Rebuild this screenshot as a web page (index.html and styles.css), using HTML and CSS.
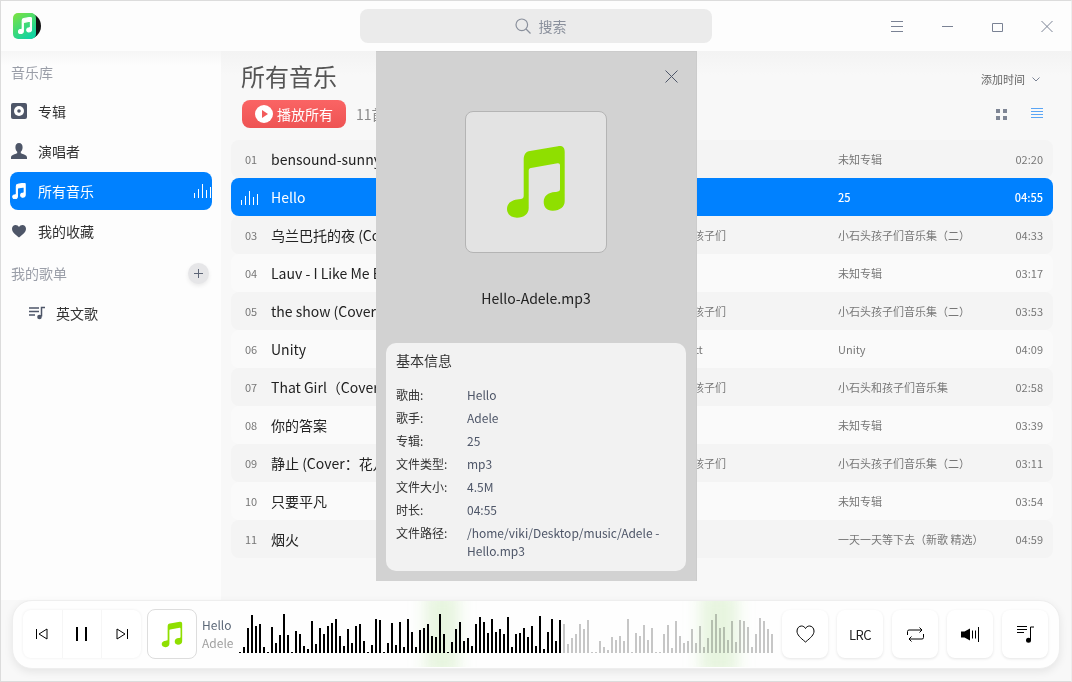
FILE: index.html
```html
<!DOCTYPE html>
<html lang="zh-CN">
<head>
    <meta charset="UTF-8">
    <title>音乐</title>
    <link rel="stylesheet" href="styles.css">
</head>
<body>
<svg class="defs" width="0" height="0">
    <symbol id="note" viewBox="0 0 62 74">
        <path d="M18.7 15C18.7 9 21 6.5 25 6L53 1.2C57.5.6 59.7 2.5 59.7 7V56C59.7 62 55 65.5 48 65.7C42 66 38.7 62 38.7 57C38.7 51 43 47.5 50 47C53 46.7 55 46.5 55 44V20.5C55 18.8 54 18 52.5 18.3L26 23C24.3 23.3 23.7 24.3 23.7 26V63C23.7 69 19 72.7 12 72.7C6 72.7 2 69 2 64C2 58 7 54.8 14 54.3C17 54 18.7 53.5 18.7 51Z"/>
    </symbol>
    <symbol id="bars" viewBox="0 0 18 14">
        <path d="M.5 14V9M4.5 14V5M8.5 14V0M12.5 14V6M16.5 14V3" fill="none" stroke="currentColor"/>
    </symbol>
</svg>
<div class="app">
    <header class="titlebar">
        <svg class="logo" viewBox="0 0 28 26">
            <circle cx="15" cy="13" r="13" fill="#111"/>
            <defs>
                <linearGradient id="logoFill" x1="0" y1="0" x2="0.6" y2="1">
                    <stop offset="0" stop-color="#7fe33e"/>
                    <stop offset="1" stop-color="#12d3a0"/>
                </linearGradient>
            </defs>
            <rect width="23" height="26" rx="5" fill="url(#logoFill)"/>
            <use href="#note" x="5" y="4" width="14" height="17" fill="#fff" stroke="#fff" stroke-width="5"/>
        </svg>
        <div class="search">
            <svg class="search-icon" viewBox="0 0 16 16"><circle cx="6.8" cy="6.8" r="5.8"/><path d="M11 11l4.5 4.5"/></svg>
            <span>搜索</span>
        </div>
        <div class="winbtns">
            <svg viewBox="0 0 12 12"><path d="M0 .5h12M0 5.500h12M0 10.500h12"/></svg>
            <svg viewBox="0 0 12 12"><path d="M1 5.500h11"/></svg>
            <svg viewBox="0 0 12 12"><path d="M1.500 2.500h10v8h-10z"/></svg>
            <svg viewBox="0 0 12 12"><path d="M.5 0l11 11M11.500 0l-11 11"/></svg>
        </div>
    </header>

    <div class="content">
        <aside class="sidebar">
            <div class="side-label">音乐库</div>
            <div class="side-item">
                <svg class="side-icon" viewBox="0 0 16 16"><rect width="16" height="16" rx="2" fill="#4e5668"/><circle cx="8" cy="8" r="5" fill="#fff"/><circle cx="8" cy="8" r="1.8" fill="#4e5668"/></svg>
                专辑
            </div>
            <div class="side-item">
                <svg class="side-icon" viewBox="0 0 16 16"><path fill="#4e5668" d="M8 0C10.4 0 11.6 1.800 11.600 4.200C11.600 6.200 10.800 7.800 9.800 8.800V10.200C11.800 11 16 11.800 16 14.500V16H0V14.500C0 11.800 4.200 11 6.200 10.200V8.800C5.200 7.800 4.400 6.200 4.400 4.200C4.400 1.800 5.600 0 8 0Z"/></svg>
                演唱者
            </div>
            <div class="side-item side-active">
                <svg class="side-icon" viewBox="0 0 16 18"><use href="#note" width="16" height="18" fill="#fff" stroke="#fff" stroke-width="5"/></svg>
                所有音乐
                <svg class="side-bars"><use href="#bars"/></svg>
            </div>
            <div class="side-item">
                <svg class="side-icon" viewBox="0 0 16 16"><path fill="#4e5668" d="M8 14.500C3.500 11 1 8.800 1 5.800C1 3.600 2.700 2 4.600 2C6 2 7.300 2.800 8 4C8.700 2.800 10 2 11.400 2C13.300 2 15 3.600 15 5.800C15 8.800 12.500 11 8 14.500Z"/></svg>
                我的收藏
            </div>
            <div class="side-label side-label-row">
                我的歌单
                <span class="add-btn"><svg viewBox="0 0 9 9"><path d="M4.500 0v9M0 4.500h9"/></svg></span>
            </div>
            <div class="side-item side-sub">
                <svg class="side-icon" viewBox="0 0 16 13"><path fill="none" stroke="#4e5668" stroke-width="1.500" d="M0 1.500h10M0 5h10M0 8.500h6"/><path fill="none" stroke="#4e5668" stroke-width="1.500" d="M12.500 10V1H16"/><circle cx="10.500" cy="10.500" r="2.300" fill="#4e5668"/></svg>
                英文歌
            </div>
        </aside>

        <main class="main">
            <div class="head-top">
                <h1>所有音乐</h1>
                <div class="sort">添加时间
                    <svg viewBox="0 0 8 5"><path d="M.5.5L4 4 7.500.5"/></svg>
                </div>
            </div>
            <div class="head-bottom">
                <div class="play-all">
                    <svg viewBox="0 0 18 18"><circle cx="9" cy="9" r="9" fill="#fff"/><path d="M7 5l6 4-6 4z" fill="#f25a5a"/></svg>
                    播放所有
                </div>
                <span class="count">11首歌曲</span>
                <div class="view-btns">
                    <svg viewBox="0 0 11 11"><path fill="#7f8695" d="M0 0h4v4H0zM7 0h4v4H7zM0 7h4v4H0zM7 7h4v4H7z"/></svg>
                    <svg viewBox="0 0 12 12"><path fill="none" stroke="#5aa5f5" d="M0 .5h12M0 3.500h12M0 6.500h12M0 9.500h12"/></svg>
                </div>
            </div>

            <div class="list">
                <div class="row"><span class="num">01</span><span class="title">bensound-sunny</span><span class="artist"></span><span class="album">未知专辑</span><span class="time">02:20</span></div>
                <div class="row row-active"><span class="num"><svg class="row-bars"><use href="#bars"/></svg></span><span class="title">Hello</span><span class="artist">Adele</span><span class="album">25</span><span class="time">04:55</span></div>
                <div class="row"><span class="num">03</span><span class="title">乌兰巴托的夜 (Cover)</span><span class="artist">小石头孩子们</span><span class="album">小石头孩子们音乐集（二）</span><span class="time">04:33</span></div>
                <div class="row"><span class="num">04</span><span class="title">Lauv - I Like Me Better</span><span class="artist"></span><span class="album">未知专辑</span><span class="time">03:17</span></div>
                <div class="row"><span class="num">05</span><span class="title">the show (Cover)</span><span class="artist">小石头孩子们</span><span class="album">小石头孩子们音乐集（二）</span><span class="time">03:53</span></div>
                <div class="row"><span class="num">06</span><span class="title">Unity</span><span class="artist">Bo Scott</span><span class="album">Unity</span><span class="time">04:09</span></div>
                <div class="row"><span class="num">07</span><span class="title">That Girl（Cover）</span><span class="artist">小石头孩子们</span><span class="album">小石头和孩子们音乐集</span><span class="time">02:58</span></div>
                <div class="row"><span class="num">08</span><span class="title">你的答案</span><span class="artist"></span><span class="album">未知专辑</span><span class="time">03:39</span></div>
                <div class="row"><span class="num">09</span><span class="title">静止 (Cover：花儿</span><span class="artist">小石头孩子们</span><span class="album">小石头孩子们音乐集（二）</span><span class="time">03:11</span></div>
                <div class="row"><span class="num">10</span><span class="title">只要平凡</span><span class="artist"></span><span class="album">未知专辑</span><span class="time">03:54</span></div>
                <div class="row"><span class="num">11</span><span class="title">烟火</span><span class="artist"></span><span class="album">一天一天等下去（新歌 精选）</span><span class="time">04:59</span></div>
            </div>
        </main>

        <!-- song info popup -->
        <section class="info-panel">
            <svg class="panel-close" viewBox="0 0 13 13"><path d="M.5.5l12 12M12.500.5l-12 12"/></svg>
            <div class="panel-cover"><svg><use href="#note" fill="#8fdf00"/></svg></div>
            <div class="panel-name">Hello-Adele.mp3</div>
            <div class="info-card">
                <h2>基本信息</h2>
                <dl>
                    <dt>歌曲:</dt><dd>Hello</dd>
                    <dt>歌手:</dt><dd>Adele</dd>
                    <dt>专辑:</dt><dd>25</dd>
                    <dt>文件类型:</dt><dd>mp3</dd>
                    <dt>文件大小:</dt><dd>4.5M</dd>
                    <dt>时长:</dt><dd>04:55</dd>
                    <dt>文件路径:</dt><dd>/home/viki/Desktop/music/Adele - Hello.mp3</dd>
                </dl>
            </div>
        </section>
    </div>

    <footer class="footer">
        <div class="player">
            <div class="ctrl-group">
                <div class="ctrl"><svg width="12" height="12" viewBox="0 0 12 12"><path class="line" d="M.5 1v10M11 1v10L3 6z"/></svg></div>
                <div class="ctrl"><svg class="pause" width="12" height="14" viewBox="0 0 12 14"><path d="M1 0h2v14H1zM10 0h2v14h-2z"/></svg></div>
                <div class="ctrl"><svg width="12" height="12" viewBox="0 0 12 12"><path class="line" d="M11.500 1v10M1 1v10l8-5z"/></svg></div>
            </div>
            <div class="cover"><svg><use href="#note" fill="#8fdf00"/></svg></div>
            <div class="now">
                <div class="now-title">Hello</div>
                <div class="now-artist">Adele</div>
            </div>
            <div class="wave">
                <svg width="535" height="42" viewBox="0 0 535 42">
                    <path class="wave-played" d="M1 42v-1M5 42v-6M9 42v-25M13 42v-38M17 42v-27M21 42v-29M25 42v-6M29 42v-1M33 42v-26M37 42v-10M41 42v-18M45 42v-39M49 42v-18M53 42v-1M57 42v-22M61 42v-19M65 42v-7M69 42v-4M73 42v-32M77 42v-9M81 42v-25M85 42v-19M89 42v-27M93 42v-30M97 42v-34M101 42v-17M105 42v-7M109 42v-24M113 42v-10M117 42v-27M121 42v-29M125 42v-12M129 42v-1M133 42v-8M137 42v-34M141 42v-33M145 42v-1M149 42v-10M153 42v-30M157 42v-8M161 42v-31M165 42v-6M169 42v-34M173 42v-21M177 42v-6M181 42v-23M185 42v-25M189 42v-29M193 42v-17M197 42v-16M201 42v-39M205 42v-19M209 42v-1M213 42v-11M217 42v-24M221 42v-31M225 42v-12M229 42v-15M233 42v-7M237 42v-29M241 42v-36M245 42v-31M249 42v-20M253 42v-34M257 42v-21M261 42v-24M265 42v-19M269 42v-36M273 42v-6M277 42v-19M281 42v-20M285 42v-25M289 42v-16M293 42v-27M297 42v-7M301 42v-37M305 42v-4M309 42v-21M313 42v-34M317 42v-12M321 42v-33"/>
                    <path class="wave-rest" d="M325 42v-29M329 42v-9M333 42v-15M337 42v-19M341 42v-29M345 42v-24M349 42v-33M353 42v-1M357 42v-1M361 42v-12M365 42v-6M369 42v-3M373 42v-16M377 42v-13M381 42v-17M385 42v-12M389 42v-34M393 42v-1M397 42v-20M401 42v-17M405 42v-28M409 42v-13M413 42v-25M417 42v-1M421 42v-1M425 42v-19M429 42v-28M433 42v-5M437 42v-32M441 42v-17M445 42v-10M449 42v-12M453 42v-24M457 42v-10M461 42v-27M465 42v-6M469 42v-15M473 42v-33M477 42v-39M481 42v-25M485 42v-26M489 42v-13M493 42v-32M497 42v-11M501 42v-33M505 42v-32M509 42v-26M513 42v-6M517 42v-19M521 42v-35M525 42v-32M529 42v-24M533 42v-19"/>
                </svg>
                <span class="glow glow-a"></span>
                <span class="glow glow-b"></span>
            </div>
            <div class="actions">
                <div class="action"><svg width="19" height="18" viewBox="0 0 19 18"><path class="line" d="M9.500 17C4 12.500 1 9.800 1 6C1 3 3.200 1 5.500 1C7.200 1 8.700 2 9.500 3.500C10.300 2 11.800 1 13.500 1C15.800 1 18 3 18 6C18 9.800 15 12.500 9.500 17Z"/></svg></div>
                <div class="action action-text">LRC</div>
                <div class="action"><svg width="17" height="15" viewBox="0 0 17 15"><path class="line" d="M.5 8V4.500Q.5 3 2 3H15M12.500.5L15 3 12.500 5.500M16.500 7v3.500Q16.500 12 15 12H2M4.500 9.500L2 12 4.500 14.500"/></svg></div>
                <div class="action"><svg width="18" height="15" viewBox="0 0 18 15"><path d="M0 4.500h3.500L9 1.500v12l-5.500-3H0z"/><path class="line" d="M11.500 3.500v8M14.500 3.500v8M17.500 0v15"/></svg></div>
                <div class="action"><svg width="17" height="17" viewBox="0 0 17 17"><path class="line" d="M0 .5h10M0 3.500h10M0 6.500h7M13.500 14V1H17"/><circle cx="11.500" cy="14.300" r="2.500"/></svg></div>
            </div>
        </div>
    </footer>
</div>
</body>
</html>
```

FILE: styles.css
```css
* {
    box-sizing: border-box;
}

body {
    margin: 0;
    font-family: "Noto Sans CJK SC", "Noto Sans", sans-serif;
    background: #fff;
}

.defs {
    position: absolute;
}

.app {
    width: 1072px;
    height: 682px;
    border: 1px solid #dcdcdc;
    border-right-color: #eee;
    display: flex;
    flex-direction: column;
    overflow: hidden;
    background: #f8f8f8;
}

/* titlebar */
.titlebar {
    height: 50px;
    flex: none;
    background: #fdfdfd;
    display: grid;
    grid-template-columns: 359px 352px 1fr;
    align-items: center;
}

.logo {
    width: 28px;
    height: 26px;
    margin: 0 0 0 12px;
}

.search {
    height: 34px;
    padding-left: 9px;
    border-radius: 8px;
    background: #ebebeb;
    display: flex;
    align-items: center;
    justify-content: center;
    gap: 8px;
    color: #8a909c;
    font-size: 14px;
}

.search-icon {
    width: 16px;
    height: 16px;
    fill: none;
    stroke: #8a909c;
    stroke-width: 1.2;
}

.winbtns {
    display: flex;
    justify-content: flex-end;
    gap: 38px;
    margin-top: 1px;
    padding-right: 18px;
}

.winbtns svg {
    width: 12px;
    height: 12px;
    fill: none;
    stroke: #7a8294;
    stroke-width: 1;
}

/* content */
.content {
    position: relative;
    flex: 1;
    min-height: 0;
    display: flex;
}

.sidebar {
    width: 220px;
    flex: none;
    padding: 0 9px;
    background: linear-gradient(#f6f6f6, #fdfdfd 14px);
}

.side-label {
    height: 41px;
    padding-left: 1px;
    display: flex;
    align-items: center;
    color: #9a9ea8;
    font-size: 14px;
}

.side-label-row {
    height: 42px;
    margin-top: 2px;
    justify-content: space-between;
    padding-right: 3px;
}

.add-btn {
    width: 21px;
    height: 21px;
    border-radius: 50%;
    background: #e6e6e8;
    box-shadow: 0 2px 4px rgba(0, 0, 0, .08);
    display: flex;
    align-items: center;
    justify-content: center;
}

.add-btn svg {
    width: 9px;
    height: 9px;
    fill: none;
    stroke: #5d6576;
    stroke-width: 1;
}

.side-item {
    height: 38px;
    margin-bottom: 2px;
    padding-left: 1px;
    border-radius: 8px;
    display: flex;
    align-items: center;
    gap: 11px;
    color: #333;
    font-size: 14px;
}

.side-icon {
    width: 16px;
    height: 16px;
    flex: none;
}

.side-active {
    background: #0081ff;
    color: #fff;
}

.side-bars {
    width: 18px;
    height: 14px;
    margin-left: auto;
    color: #fff;
}

.side-sub {
    padding-left: 19px;
    margin-bottom: 0;
}

/* main list */
.main {
    flex: 1;
    min-width: 0;
    padding: 7px 18px 0 10px;
    background: linear-gradient(#f3f3f3, #f8f8f8 24px);
}

.head-top,
.head-bottom {
    padding: 0 10px;
    display: flex;
    align-items: center;
}

.head-top {
    height: 38px;
    margin-bottom: 4px;
    justify-content: space-between;
}

h1 {
    margin: 0 0 4px;
    font-size: 24px;
    font-weight: 400;
    color: #555;
}

.sort {
    display: flex;
    align-items: center;
    gap: 7px;
    padding: 4px 3px 0 1px;
    font-size: 11px;
    color: #666;
}

.sort svg {
    width: 8px;
    height: 5px;
    fill: none;
    stroke: #7a8294;
}

.head-bottom {
    height: 28px;
    margin-bottom: 12px;
}

.play-all {
    width: 104px;
    height: 28px;
    margin-left: 1px;
    border-radius: 8px;
    background: linear-gradient(#fa6464, #ee5353);
    display: flex;
    align-items: center;
    gap: 4px;
    padding-left: 13px;
    color: #fff;
    font-size: 14px;
}

.play-all svg {
    width: 18px;
    height: 18px;
}

.count {
    margin-left: 10px;
    color: #8a8a8a;
    font-size: 14px;
}

.view-btns {
    margin-left: auto;
    display: flex;
    gap: 24px;
    align-items: center;
}

.view-btns svg:first-child {
    width: 11px;
    height: 11px;
}

.view-btns svg:last-child {
    width: 12px;
    height: 12px;
}

.row {
    height: 38px;
    border-radius: 8px;
    display: grid;
    grid-template-columns: 40px 389px 178px 1fr 50px;
    align-items: center;
    padding-right: 10px;
    background: #fafafa;
    font-size: 11px;
    color: #777;
}

.row:nth-child(odd) {
    background: #f4f4f4;
}

.row .num {
    padding-left: 14px;
    display: flex;
    align-items: center;
    color: #777;
}

.row .title {
    color: #222;
    font-size: 14px;
    white-space: nowrap;
    overflow: hidden;
}

.row .time {
    text-align: right;
}

.row-active,
.row-active:nth-child(odd) {
    background: #0081ff;
    color: #fff;
}

.row-active .title {
    color: #fff;
}

.row-active .album,
.row-active .time {
    font-weight: 500;
}

.row-bars {
    width: 18px;
    height: 14px;
    margin-left: -4px;
    margin-top: 2px;
    color: #fff;
}

/* song info popup */
.info-panel {
    position: absolute;
    left: 375px;
    top: 0;
    width: 321px;
    height: 530px;
    background: #d2d2d2;
    border-top: 1px solid #ccc;
    border-right: 1px solid #ccc;
    padding: 59px 10px 10px;
}

.panel-close {
    position: absolute;
    top: 18px;
    left: 289px;
    width: 13px;
    height: 13px;
    fill: none;
    stroke: #4e5668;
    stroke-width: 1;
}

.panel-cover {
    width: 142px;
    height: 142px;
    margin: 0 auto 0 79px;
    border: 1px solid #b4b4b4;
    border-radius: 8px;
    background: #e3e3e3;
    display: flex;
    align-items: center;
    justify-content: center;
}

.panel-cover svg {
    width: 62px;
    height: 74px;
}

.panel-name {
    height: 20px;
    margin: 35px 0;
    text-align: center;
    font-size: 14px;
    line-height: 20px;
    color: #222;
}

.info-card {
    height: 228px;
    border-radius: 10px;
    background: #f2f2f2;
    padding: 6px 10px;
}

.info-card h2 {
    margin: 0 0 15px;
    font-size: 14px;
    font-weight: 400;
    line-height: 22px;
    color: #333;
}

.info-card dl {
    margin: 0;
    display: grid;
    grid-template-columns: 71px 1fr;
    row-gap: 5px;
    font-size: 12px;
    line-height: 18px;
}

.info-card dt {
    color: #333;
}

.info-card dd {
    margin: 0;
    color: #4e5668;
}

/* player */
.footer {
    flex: none;
    height: 81px;
    padding: 0 11px 11px;
}

.player {
    height: 69px;
    position: relative;
    border: 1px solid #eee;
    border-radius: 20px;
    background: #fefefe;
    box-shadow: 0 3px 8px rgba(0, 0, 0, .08);
    display: flex;
    align-items: center;
    padding: 0 0 1px 10px;
}

.player svg {
    fill: #000;
}

.player svg .line {
    fill: none;
    stroke: #000;
    stroke-width: 1;
}

.ctrl-group {
    width: 118px;
    height: 48px;
    flex: none;
    border-radius: 8px;
    background: #fff;
    box-shadow: 0 0 3px rgba(0, 0, 0, .07);
    display: flex;
}

.ctrl {
    flex: 1;
    display: flex;
    align-items: center;
    justify-content: center;
}

.ctrl + .ctrl {
    border-left: 1px solid #f6f6f6;
}

.pause {
    margin-left: -2px;
}

.cover {
    width: 50px;
    height: 50px;
    flex: none;
    margin-left: 6px;
    border: 1px solid #ddd;
    border-radius: 8px;
    background: #fff;
    display: flex;
    align-items: center;
    justify-content: center;
}

.cover svg {
    width: 22px;
    height: 27px;
}

.now {
    width: 37px;
    flex: none;
    margin-left: 5px;
    font-size: 12px;
    line-height: 18px;
}

.now-title {
    color: #5c6878;
}

.now-artist {
    color: #a0a0a0;
}

.wave {
    width: 535px;
    height: 66px;
    flex: none;
    position: relative;
    overflow: hidden;
    display: flex;
    align-items: flex-end;
    padding-bottom: 14px;
}

.wave-played,
.wave-rest {
    fill: none;
    stroke-width: 2;
}

.wave-played {
    stroke: #000;
}

.wave-rest {
    stroke: #c6c6c6;
}

.glow {
    position: absolute;
    top: -10px;
    bottom: -10px;
    background: #e8f6e0;
    filter: blur(8px);
    mix-blend-mode: multiply;
}

.glow-a {
    left: 186px;
    width: 34px;
}

.glow-b {
    left: 461px;
    width: 38px;
}

.actions {
    margin-left: 8px;
    display: flex;
    gap: 9px;
}

.action {
    width: 46px;
    height: 48px;
    border-radius: 8px;
    background: #fff;
    box-shadow: 0 1px 3px rgba(0, 0, 0, .1);
    display: flex;
    align-items: center;
    justify-content: center;
}

.action-text {
    font-size: 13px;
    letter-spacing: -.6px;
    color: #222;
}
```
